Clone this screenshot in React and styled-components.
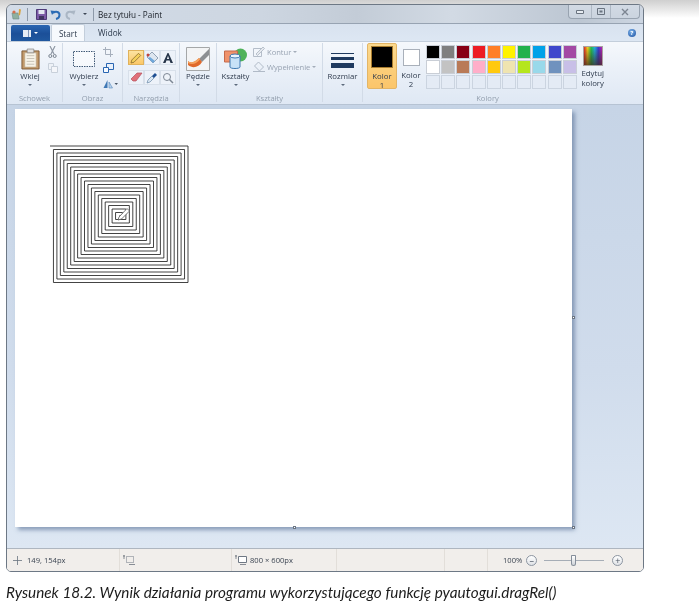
import styled, { createGlobalStyle } from "styled-components";

const Reset = createGlobalStyle`
  html, body { margin: 0; padding: 0; background: #fff; }
`;

const Page = styled.div`
  width: 699px;
  height: 614px;
  padding: 4px 0 0 6px;
  box-sizing: border-box;
  overflow: hidden;
  background: linear-gradient(#cfcfcf, #f4f4f4 14px, #fff 18px);
  font-family: "Open Sans", "Noto Sans", sans-serif;
`;

const Window = styled.div`
  width: 638px;
  height: 568px;
  box-sizing: border-box;
  display: flex;
  flex-direction: column;
  border: 1px solid #6d7885;
  border-radius: 6px 6px 5px 5px;
  overflow: hidden;
  filter: blur(0.4px);
`;

const TitleBar = styled.div`
  height: 19px;
  flex: none;
  display: flex;
  align-items: center;
  padding-left: 4px;
  background: linear-gradient(90deg, #d3dce8 0%, #cdd6e1 40%, #c3ccd7 55%, #d2dae4 70%, #bcc6d2 90%, #cdd6e2 100%);
  border-bottom: 1px solid #97a3b2;
  box-sizing: border-box;
`;

const Quick = styled.div`
  width: ${(p) => p.$w}px;
  display: flex;
  justify-content: center;
  align-items: center;
  flex: none;
`;

const QuickSep = styled.div`
  width: 1px;
  height: 13px;
  background: #8d99a8;
  margin: 0 4px;
  flex: none;
`;

const Title = styled.div`
  font-size: 8.2px;
  color: #20262e;
  white-space: nowrap;
`;

const Controls = styled.div`
  margin-left: auto;
  margin-right: 3px;
  align-self: flex-start;
  height: 13px;
  display: flex;
  border: 1px solid #98a3b0;
  border-top: none;
  border-radius: 0 0 4px 4px;
  background: linear-gradient(#d2dae4, #cbd4df);
`;

const Control = styled.div`
  width: ${(p) => p.$w}px;
  display: flex;
  align-items: center;
  justify-content: center;
  border-right: ${(p) => (p.$last ? "none" : "1px solid #aeb8c4")};
`;

const TabRow = styled.div`
  height: 17px;
  flex: none;
  display: flex;
  align-items: flex-end;
  padding-left: 4px;
  padding-right: 7px;
  background: linear-gradient(#d8e2ef, #dde7f3);
`;

const AppButton = styled.div`
  width: 39px;
  height: 16px;
  display: flex;
  align-items: center;
  justify-content: center;
  gap: 3px;
  border-radius: 2px 2px 0 0;
  background: linear-gradient(#2a66b2, #1b4f98 55%, #20589f);
`;

const Tab = styled.div`
  width: ${(p) => p.$w}px;
  height: 17px;
  margin-left: ${(p) => p.$gap || 0}px;
  display: flex;
  align-items: center;
  justify-content: center;
  font-size: 8.2px;
  color: #2d3a4c;
  box-sizing: border-box;
  ${(p) =>
    p.$active &&
    `background: #f6f9fd; border: 1px solid #c3cedb; border-bottom: none; border-radius: 2px 2px 0 0;`}
`;

const Help = styled.div`
  margin-left: auto;
  align-self: center;
  width: 8px;
  height: 8px;
  border-radius: 50%;
  background: radial-gradient(circle at 40% 35%, #7ab2ea, #1c4f9f);
  color: #fff;
  font-size: 6px;
  font-weight: 700;
  line-height: 8px;
  text-align: center;
`;

const Ribbon = styled.div`
  height: 64px;
  flex: none;
  display: flex;
  box-sizing: border-box;
  background: linear-gradient(#f5f8fc, #eaf0f8 45%, #dfe8f4);
  border-top: 1px solid #c3cedb;
  border-bottom: 1px solid #b6c3d3;
`;

const Group = styled.div`
  width: ${(p) => p.$w}px;
  flex: none;
  display: flex;
  flex-direction: column;
  box-sizing: border-box;
  border-right: ${(p) => (p.$plain ? "none" : "1px solid #d2dbe7")};
  margin: 1px 0 2px;
`;

const GroupBody = styled.div`
  height: 48px;
  flex: none;
  display: flex;
  align-items: flex-start;
  padding-left: ${(p) => p.$pad || 0}px;
  gap: ${(p) => p.$gap || 0}px;
`;

const GroupLabel = styled.div`
  font-size: 7.6px;
  line-height: 12px;
  margin-top: 1px;
  text-align: center;
  color: #939fae;
`;

const BigButton = styled.div`
  width: ${(p) => p.$w}px;
  flex: none;
  display: flex;
  flex-direction: column;
  align-items: center;
  font-size: 7.8px;
  line-height: 9px;
  color: #2f3b4d;
  padding-top: 3px;
`;

const IconSlot = styled.div`
  height: 25px;
  display: flex;
  align-items: center;
  justify-content: center;
  margin-bottom: 1px;
`;

const Arrow = styled.div`
  width: 0;
  height: 0;
  margin: ${(p) => p.$m || "3px 0 0"};
  border-left: 2px solid transparent;
  border-right: 2px solid transparent;
  border-top: 2px solid ${(p) => p.$c || "#5d6a7c"};
`;

const SmallColumn = styled.div`
  display: flex;
  flex-direction: column;
  align-items: flex-start;
  gap: ${(p) => p.$gap}px;
  padding-top: ${(p) => p.$top}px;
`;

const ToolGrid = styled.div`
  display: grid;
  grid-template-columns: repeat(3, 16px);
  grid-auto-rows: 15px;
  row-gap: 5px;
  margin-top: 7px;
`;

const Tool = styled.div`
  display: flex;
  align-items: center;
  justify-content: center;
  box-sizing: border-box;
  border: 1px solid ${(p) => (p.$on ? "#e0b25c" : "#d8e0ea")};
  background: ${(p) => (p.$on ? "linear-gradient(#fde3a0, #fbc868)" : "#edf2f9")};
`;

const TextRow = styled.div`
  display: flex;
  align-items: center;
  gap: 2px;
  font-size: 7.6px;
  color: #98a3b2;
  white-space: nowrap;
`;

const ColorButton = styled.div`
  width: ${(p) => p.$w}px;
  height: 46px;
  flex: none;
  display: flex;
  flex-direction: column;
  align-items: center;
  box-sizing: border-box;
  padding-top: ${(p) => p.$top}px;
  border-radius: 2px;
  border: 1px solid transparent;
  ${(p) => p.$on && `background: linear-gradient(#fbd98e, #fbc56a); border-color: #e3b566;`}
`;

const ColorName = styled.div`
  width: 20px;
  font-size: 7.8px;
  line-height: 9px;
  text-align: center;
  color: #2f3b4d;
`;

const Swatch = styled.div`
  width: ${(p) => p.$size}px;
  height: ${(p) => p.$size}px;
  flex: none;
  box-sizing: border-box;
  margin-bottom: ${(p) => p.$mb}px;
  background: ${(p) => p.$c};
  border: ${(p) => p.$b};
`;

const Palette = styled.div`
  display: grid;
  grid-template-columns: repeat(10, 14px);
  grid-auto-rows: 14px;
  column-gap: 1.2px;
  row-gap: 1px;
  margin-top: 2px;
  margin-left: 1px;
`;

const Cell = styled.div`
  box-sizing: border-box;
  border: 1px solid ${(p) => (p.$c ? "#c9ced6" : "#cbd4e0")};
  background: ${(p) => p.$c || "#e4ebf5"};
`;

const EditColors = styled.div`
  width: 24px;
  margin-left: 4px;
  display: flex;
  flex-direction: column;
  align-items: center;
  font-size: 7.8px;
  line-height: 9.5px;
  text-align: center;
  color: #2f3b4d;
  padding-top: 3px;
`;

const Rainbow = styled.div`
  width: 20px;
  height: 20px;
  margin-bottom: 3px;
  box-sizing: border-box;
  border: 1px solid #a9a2a0;
  background:
    linear-gradient(rgba(0, 0, 0, 0), rgba(60, 40, 30, 0.75)),
    linear-gradient(90deg, #e6252a, #f0d020, #22c04a, #20b0e0, #3a3ad0, #c020b0);
`;

const SizeLines = styled.div`
  display: flex;
  flex-direction: column;
  gap: 3px;
  width: 23px;
  margin-top: 3px;
`;

const SizeLine = styled.div`
  height: ${(p) => p.$h}px;
  background: #1f3a5f;
`;

const Workspace = styled.div`
  flex: 1;
  min-height: 0;
  padding: 4px 0 0 8px;
  background: linear-gradient(#c6d4e6, #d0dcec 60%, #dde7f3);
`;

const Canvas = styled.div`
  position: relative;
  width: 557px;
  height: 418px;
  background: #fff;
  box-shadow: 3px 3px 4px rgba(95, 120, 155, 0.65);
`;

const Handle = styled.div`
  position: absolute;
  left: ${(p) => p.$x};
  top: ${(p) => p.$y};
  width: 3px;
  height: 3px;
  background: #fff;
  border: 1px solid #6c7684;
  box-sizing: border-box;
`;

const StatusBar = styled.div`
  height: 23px;
  flex: none;
  display: flex;
  box-sizing: border-box;
  font-size: 7.6px;
  color: #3d4653;
  background: #f1eeeb;
  border-top: 1px solid #aeb6c0;
`;

const StatusCell = styled.div`
  width: ${(p) => p.$w}px;
  flex: none;
  display: flex;
  align-items: center;
  gap: 3px;
  padding-left: ${(p) => p.$pad || 0}px;
  box-sizing: border-box;
  border-right: 1px solid #e2ded9;
`;

const Zoomer = styled.div`
  flex: 1;
  display: flex;
  align-items: center;
  padding-left: 15px;
`;

const ZoomButton = styled.div`
  width: 11px;
  height: 11px;
  border-radius: 50%;
  border: 1px solid #8c95a1;
  background: linear-gradient(#fff, #dfe2e6);
  box-sizing: border-box;
  display: flex;
  align-items: center;
  justify-content: center;
  margin-left: ${(p) => p.$gap}px;
  color: #4a5361;
  font-size: 9px;
  line-height: 9px;
`;

const Slider = styled.div`
  position: relative;
  width: 60px;
  height: 1px;
  margin-left: 7px;
  background: #a6adb6;
`;

const Thumb = styled.div`
  position: absolute;
  left: 27px;
  top: -5px;
  width: 5px;
  height: 11px;
  border-radius: 1px 1px 3px 3px;
  border: 1px solid #858e9a;
  box-sizing: border-box;
  background: linear-gradient(#fff, #cfd3d8);
`;

const Grip = styled.div`
  margin-left: auto;
  margin-right: 2px;
  align-self: flex-end;
  margin-bottom: 2px;
  width: 7px;
  height: 6px;
  background: radial-gradient(circle, #a8aeb6 40%, transparent 45%) 0 0 / 2px 2px;
`;

const Caption = styled.div`
  margin-top: 11px;
  font-family: Lato, "Open Sans", sans-serif;
  font-style: italic;
  font-size: 15.3px;
  line-height: 18px;
  color: #1c1c1c;
  white-space: nowrap;
  filter: blur(0.25px);
`;

const colors = [
  "#000000", "#7f7f7f", "#880015", "#ed1c24", "#ff7f27", "#fff200", "#22b14c", "#00a2e8", "#3f48cc", "#a349a4",
  "#ffffff", "#c3c3c3", "#b97a57", "#ffaec9", "#ffc90e", "#efe4b0", "#b5e61d", "#99d9ea", "#7092be", "#c8bfe7",
  null, null, null, null, null, null, null, null, null, null,
];

// same path as the dragRel loop, scaled down to the size of the screenshot
function spiralPoints() {
  let x = 35;
  let y = 37;
  const kx = 0.69;
  const ky = 0.7;
  const pts = [[x, y]];
  let d = 200;
  while (d > 0) {
    x += d * kx;
    pts.push([x, y]);
    d -= 5;
    y += d * ky;
    pts.push([x, y]);
    x -= d * kx;
    pts.push([x, y]);
    d -= 5;
    y -= d * ky;
    pts.push([x, y]);
  }
  return pts.map((p) => p.map((v) => v.toFixed(2)).join(",")).join(" ");
}

const PaintIcon = () => (
  <svg width="12" height="12" viewBox="0 0 12 12">
    <path d="M1 5h6l1 6H2z" fill="#8fb0a0" stroke="#6d8c84" strokeWidth=".6" />
    <path d="M8 1l2 .5-1 6-1.5-.5z" fill="#d9a441" />
    <circle cx="3" cy="4" r="1.6" fill="#d8704a" />
  </svg>
);

const SaveIcon = () => (
  <svg width="11" height="11" viewBox="0 0 11 11">
    <path d="M.5.5h10v10H.5z" fill="#7b5aa6" stroke="#4f3a78" />
    <path d="M2.5 1h6v4h-6z" fill="#e4e8f2" />
    <path d="M3 7h5v3.5H3z" fill="#3f3560" />
  </svg>
);

const UndoIcon = ({ color }) => (
  <svg width="11" height="11" viewBox="0 0 11 11">
    <path d="M3 4c3-2.4 6.500-1 6.500 2 0 2-1.500 3.600-3.500 4" fill="none" stroke={color} strokeWidth="2" />
    <path d="M.5 1.500l4.500.5-3 4z" fill={color} />
  </svg>
);

const RedoIcon = ({ color }) => (
  <svg width="11" height="11" viewBox="0 0 11 11">
    <path d="M8 4c-3-2.4-6.500-1-6.500 2 0 2 1.500 3.600 3.500 4" fill="none" stroke={color} strokeWidth="2" />
    <path d="M10.500 1.500l-4.500.5 3 4z" fill={color} />
  </svg>
);

const Clipboard = () => (
  <svg width="19" height="22" viewBox="0 0 20 23">
    <path d="M1 3h18v19H1z" fill="#c39a6b" stroke="#7d5a36" />
    <path d="M4 5h12v15H4z" fill="#f7f3e8" stroke="#b7a78c" strokeWidth=".6" />
    <path d="M6 8h8M6 11h8M6 14h8M6 17h8" stroke="#b9b4a6" strokeWidth=".8" />
    <path d="M6.500 1h7v4h-7z" fill="#e2e2e2" stroke="#7c7c7c" strokeWidth=".7" />
  </svg>
);

const Scissors = () => (
  <svg width="9" height="12" viewBox="0 0 9 12">
    <path d="M2 0l4 8M7 0L3 8" stroke="#8f98a4" strokeWidth="1.200" />
    <circle cx="2.300" cy="10" r="1.500" fill="none" stroke="#7a838f" />
    <circle cx="6.700" cy="10" r="1.500" fill="none" stroke="#7a838f" />
  </svg>
);

const CopyIcon = () => (
  <svg width="10" height="10" viewBox="0 0 10 10">
    <path d="M.5.5h5v6h-5z" fill="#eef2f7" stroke="#c8d0da" />
    <path d="M3.500 3.500h6v6h-6z" fill="#f4f6fa" stroke="#c8d0da" />
  </svg>
);

const Crop = () => (
  <svg width="10" height="10" viewBox="0 0 10 10">
    <path d="M2.500 0v7.500H10M0 2.500h7.500V10" fill="none" stroke="#a6afbc" />
  </svg>
);

const Resize = () => (
  <svg width="11" height="10" viewBox="0 0 11 10">
    <path d="M3.500.5h7v6h-7z" fill="#e9f1fb" stroke="#2a66b2" />
    <path d="M.5 4.500h5v5h-5z" fill="#f8fbff" stroke="#2a66b2" />
  </svg>
);

const Rotate = () => (
  <svg width="15" height="10" viewBox="0 0 15 10">
    <path d="M4.500 1v8H.5z" fill="#3f78b5" />
    <path d="M6 3l3.500 6H6z" fill="#bcd3ea" stroke="#3f78b5" strokeWidth=".5" />
    <path d="M11.500 4h3.500l-1.750 2z" fill="#4a5666" />
  </svg>
);

const Pencil = ({ stroke = "#8a6d2e" }) => (
  <svg width="12" height="12" viewBox="0 0 12 12">
    <path d="M1 11l.8-3L8.500 1.300l2.200 2.200L4 10.200z" fill="#f4d05c" stroke={stroke} strokeWidth=".8" />
  </svg>
);

const Fill = () => (
  <svg width="13" height="13" viewBox="0 0 13 13">
    <path d="M6 1l6 6-5 5-6-6z" fill="#dde6f0" stroke="#7c8fa5" strokeWidth=".8" />
    <path d="M2 7l5 5 2-2-5-4z" fill="#6fa8dc" />
    <circle cx="2" cy="4" r="1.500" fill="#c0453f" />
  </svg>
);

const Eraser = () => (
  <svg width="13" height="11" viewBox="0 0 13 11">
    <path d="M1 7l6-6h5L6 9H3z" fill="#e0707a" stroke="#b5505c" strokeWidth=".7" />
  </svg>
);

const Picker = () => (
  <svg width="12" height="12" viewBox="0 0 12 12">
    <path d="M1 11l1-3 4-4 2 2-4 4z" fill="#dbe8f4" stroke="#6c8aa8" strokeWidth=".7" />
    <path d="M6 4l3-3 2 2-3 3z" fill="#1f4f92" />
  </svg>
);

const Magnifier = () => (
  <svg width="12" height="12" viewBox="0 0 12 12">
    <circle cx="5" cy="5" r="3.500" fill="#eef3f9" stroke="#7d8794" />
    <path d="M7.500 7.500L11 11" stroke="#7d8794" strokeWidth="1.500" />
  </svg>
);

const Brush = () => (
  <svg width="24" height="24" viewBox="0 0 24 24">
    <path d="M.5.5h23v23H.5z" fill="#f3f4f5" stroke="#a5a7a8" />
    <path d="M23 2L13 12l3 3 7-7z" fill="#8c8f92" />
    <path d="M2 14c3 3 7 1 11-3l3 4c-3 5-9 7-14 3z" fill="#e0692b" />
    <path d="M2 14c3 3 7 1 11-3l1 1.500C10 17 6 18 2 16z" fill="#f4a35f" />
  </svg>
);

const Shapes = () => (
  <svg width="24" height="22" viewBox="0 0 24 22">
    <circle cx="16.500" cy="7" r="6.500" fill="#4fb25a" />
    <path d="M.5 3h13v11H.5z" fill="#f0926b" stroke="#c46a4c" />
    <path d="M6 8v11c0 2 10 2 10 0V8z" fill="#c8e2f7" stroke="#3e78b0" />
    <ellipse cx="11" cy="8" rx="5" ry="2" fill="#e9f4fd" stroke="#3e78b0" />
  </svg>
);

const Outline = () => (
  <svg width="12" height="11" viewBox="0 0 12 11">
    <path d="M.5 2.500h8v8h-8z" fill="none" stroke="#b4bdc9" />
    <path d="M3 8L10 1l1.500 1.500-7 7z" fill="#e5e9ef" stroke="#a4adba" strokeWidth=".7" />
  </svg>
);

const Bucket = () => (
  <svg width="12" height="11" viewBox="0 0 12 11">
    <path d="M5.500 1l5 5-4 4-5-5z" fill="none" stroke="#b0bac7" />
    <path d="M0 10.500h12" stroke="#b0bac7" />
  </svg>
);

const Move = () => (
  <svg width="9" height="9" viewBox="0 0 9 9">
    <path d="M4.500 0v9M0 4.500h9" stroke="#6a7380" strokeWidth=".8" />
  </svg>
);

const SelSize = () => (
  <svg width="12" height="10" viewBox="0 0 12 10">
    <path d="M1 0v4M0 1h2" stroke="#59626f" strokeWidth=".7" />
    <path d="M3.500 1.500h7v6h-7z" fill="none" stroke="#6f7884" strokeDasharray="1 1" />
    <path d="M6 9.500h6" stroke="#59626f" strokeWidth=".7" />
  </svg>
);

const CanvasSize = () => (
  <svg width="12" height="10" viewBox="0 0 12 10">
    <path d="M1 0v4M0 1h2" stroke="#59626f" strokeWidth=".7" />
    <path d="M3.500 1.500h8v6h-8z" fill="#fff" stroke="#6f7884" />
    <path d="M5 9.500h6" stroke="#59626f" strokeWidth=".7" />
  </svg>
);

export default function App() {
  return (
    <Page>
      <Reset />
      <Window>
        <TitleBar>
          <Quick $w={12}><PaintIcon /></Quick>
          <QuickSep />
          <Quick $w={18}><SaveIcon /></Quick>
          <Quick $w={11}><UndoIcon color="#2b6cb5" /></Quick>
          <Quick $w={19}><RedoIcon color="#aab6c4" /></Quick>
          <Quick $w={9}><Arrow $m="0" $c="#3c4654" /></Quick>
          <QuickSep />
          <Title>Bez tytułu - Paint</Title>
          <Controls>
            <Control $w={22}>
              <svg width="8" height="4"><path d="M.5.5h7v3h-7z" fill="#e7ecf2" stroke="#6a7480" /></svg>
            </Control>
            <Control $w={18}>
              <svg width="8" height="7"><path d="M.5.5h7v6h-7z" fill="none" stroke="#6a7480" /><path d="M2.500 2.500h3v2h-3z" fill="#6a7480" /></svg>
            </Control>
            <Control $w={28} $last>
              <svg width="8" height="8"><path d="M1 1l6 6M7 1L1 7" stroke="#7c8591" strokeWidth="1.400" /></svg>
            </Control>
          </Controls>
        </TitleBar>
        <TabRow>
          <AppButton>
            <svg width="8" height="7"><path d="M0 0h8v7H0z" fill="#e6edf6" /><path d="M5 0h1v7H5z" fill="#7f97ba" /></svg>
            <Arrow $m="0" $c="#fff" />
          </AppButton>
          <Tab $w={34} $active $gap={1}>Start</Tab>
          <Tab $w={36} $gap={7}>Widok</Tab>
          <Help>?</Help>
        </TabRow>
        <Ribbon>
          <Group $w={56}>
            <GroupBody $pad={10} $gap={5}>
              <BigButton $w={26}>
                <IconSlot><Clipboard /></IconSlot>
                Wklej
                <Arrow />
              </BigButton>
              <SmallColumn $top={3} $gap={5}>
                <Scissors />
                <CopyIcon />
              </SmallColumn>
            </GroupBody>
            <GroupLabel>Schowek</GroupLabel>
          </Group>
          <Group $w={60}>
            <GroupBody $pad={6} $gap={4}>
              <BigButton $w={30}>
                <IconSlot>
                  <svg width="22" height="16"><path d="M.5.5h21v15H.5z" fill="#fff" fillOpacity=".5" stroke="#3f5875" strokeDasharray="1.500 1" /></svg>
                </IconSlot>
                Wybierz
                <Arrow />
              </BigButton>
              <SmallColumn $top={4} $gap={6}>
                <Crop />
                <Resize />
                <Rotate />
              </SmallColumn>
            </GroupBody>
            <GroupLabel>Obraz</GroupLabel>
          </Group>
          <Group $w={57}>
            <GroupBody $pad={5}>
              <ToolGrid>
                <Tool $on><Pencil /></Tool>
                <Tool><Fill /></Tool>
                <Tool>
                  <svg width="12" height="12"><path d="M1 11L5.500 1h1L11 11H8.500L7.600 8.500H4.400L3.500 11zM4.900 7h2.200L6 3.800z" fill="#27364a" /></svg>
                </Tool>
                <Tool><Eraser /></Tool>
                <Tool><Picker /></Tool>
                <Tool><Magnifier /></Tool>
              </ToolGrid>
            </GroupBody>
            <GroupLabel>Narzędzia</GroupLabel>
          </Group>
          <Group $w={37}>
            <GroupBody>
              <BigButton $w={36}>
                <IconSlot><Brush /></IconSlot>
                Pędzle
                <Arrow />
              </BigButton>
            </GroupBody>
            <GroupLabel />
          </Group>
          <Group $w={106}>
            <GroupBody $pad={4} $gap={3}>
              <BigButton $w={29}>
                <IconSlot><Shapes /></IconSlot>
                Kształty
                <Arrow />
              </BigButton>
              <SmallColumn $top={3} $gap={4}>
                <TextRow><Outline />Kontur<Arrow $m="0" $c="#a4adba" /></TextRow>
                <TextRow><Bucket />Wypełnienie<Arrow $m="0" $c="#a4adba" /></TextRow>
              </SmallColumn>
            </GroupBody>
            <GroupLabel>Kształty</GroupLabel>
          </Group>
          <Group $w={40}>
            <GroupBody>
              <BigButton $w={39}>
                <IconSlot>
                  <SizeLines>
                    <SizeLine $h={1} />
                    <SizeLine $h={3} />
                    <SizeLine $h={5} />
                  </SizeLines>
                </IconSlot>
                Rozmiar
                <Arrow />
              </BigButton>
            </GroupBody>
            <GroupLabel />
          </Group>
          <Group $w={249} $plain>
            <GroupBody $pad={4}>
              <ColorButton $w={30} $on $top={2}>
                <Swatch $size={22} $mb={4} $c="#000" $b="1px solid #a87c2e" />
                <ColorName>Kolor 1</ColorName>
              </ColorButton>
              <ColorButton $w={28} $top={5}>
                <Swatch $size={17} $mb={5} $c="#fff" $b="1px solid #a9b0ba" />
                <ColorName>Kolor 2</ColorName>
              </ColorButton>
              <Palette>
                {colors.map((c, i) => (
                  <Cell key={i} $c={c} />
                ))}
              </Palette>
              <EditColors>
                <Rainbow />
                Edytuj kolory
              </EditColors>
            </GroupBody>
            <GroupLabel>Kolory</GroupLabel>
          </Group>
        </Ribbon>
        <Workspace>
          <Canvas>
            <svg width="557" height="418" style={{ display: "block" }}>
              <polyline points={spiralPoints()} fill="none" stroke="#222" strokeWidth=".85" />
              <path d="M104 108l8-8.500 2.500 2.500-8 8-3.500 1z" fill="#fff" stroke="#555" strokeWidth=".8" />
            </svg>
            <Handle $x="557px" $y="207px" />
            <Handle $x="278px" $y="417px" />
            <Handle $x="557px" $y="417px" />
          </Canvas>
        </Workspace>
        <StatusBar>
          <StatusCell $w={113} $pad={6}><Move />&nbsp;149, 154px</StatusCell>
          <StatusCell $w={112} $pad={3}><SelSize /></StatusCell>
          <StatusCell $w={105} $pad={3}><CanvasSize />800 × 600px</StatusCell>
          <StatusCell $w={108} />
          <StatusCell $w={43} />
          <Zoomer>
            100%
            <ZoomButton $gap={4}>–</ZoomButton>
            <Slider><Thumb /></Slider>
            <ZoomButton $gap={8}>+</ZoomButton>
            <Grip />
          </Zoomer>
        </StatusBar>
      </Window>
      <Caption>Rysunek 18.2. Wynik działania programu wykorzystującego funkcję pyautogui.dragRel()</Caption>
    </Page>
  );
}
